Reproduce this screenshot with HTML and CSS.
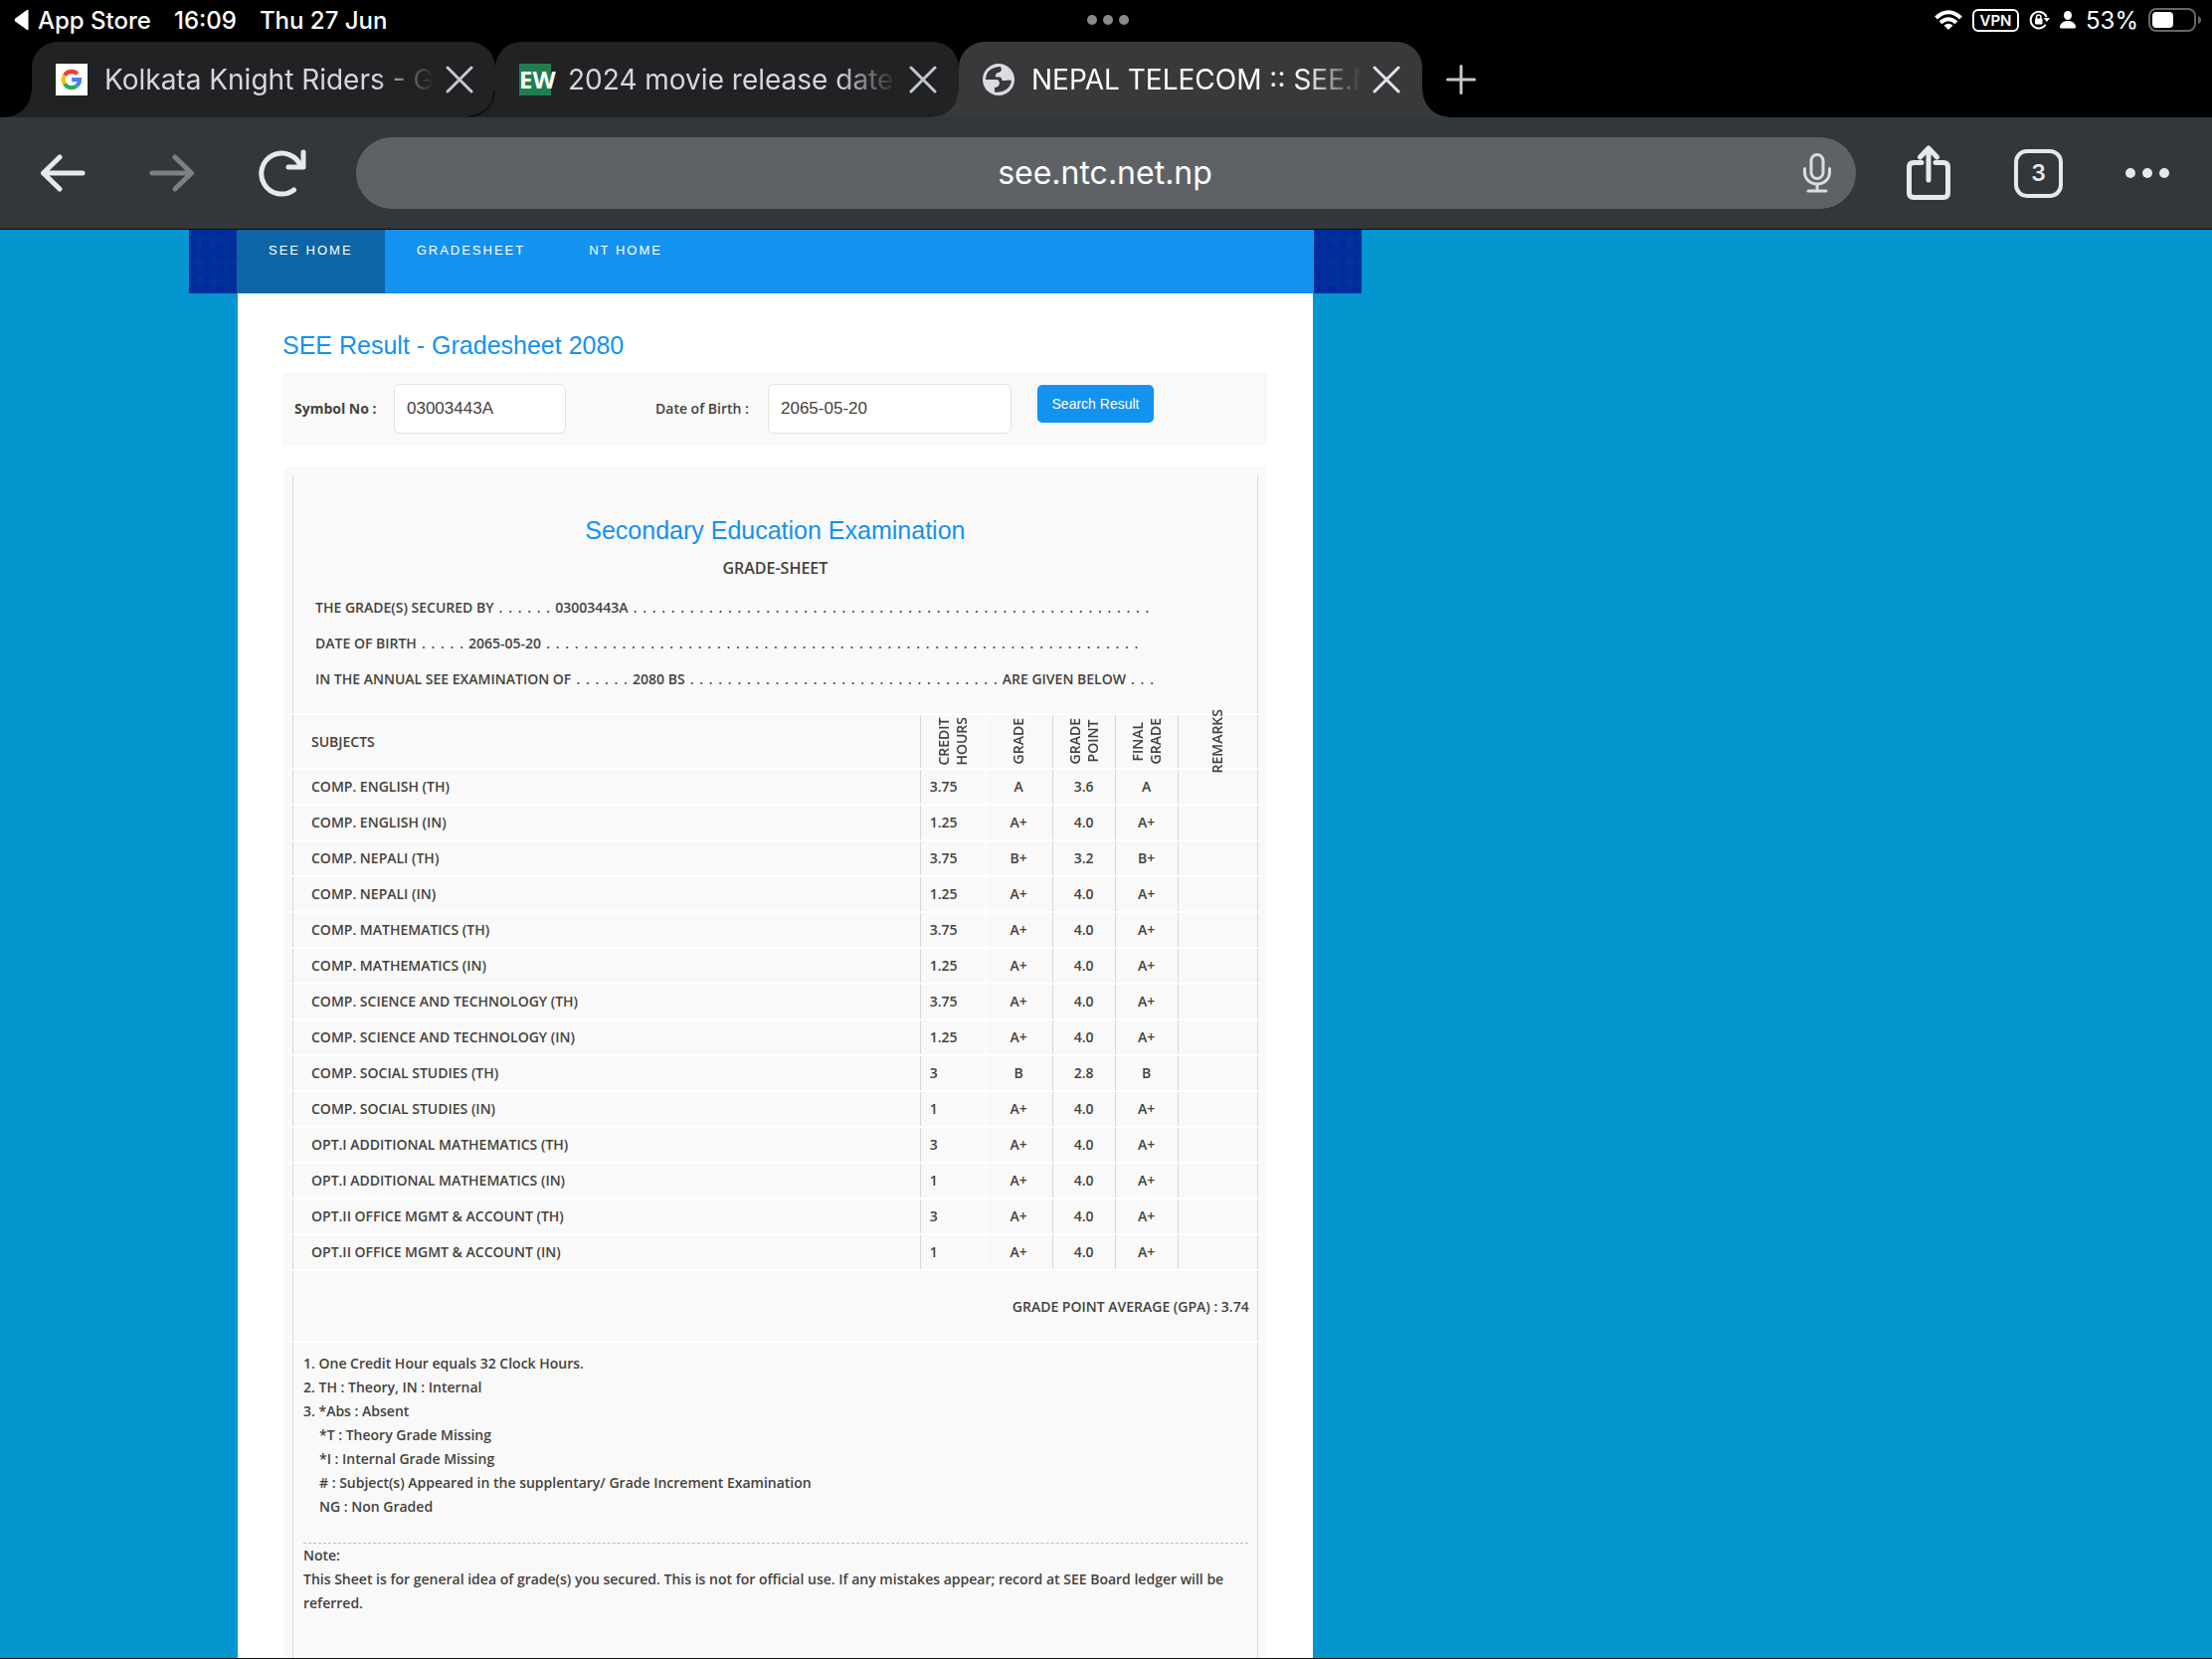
FILE: index.html
```html
<!DOCTYPE html>
<html lang="en">
<head>
<meta charset="utf-8">
<title>NEPAL TELECOM :: SEE.NTC.NET.NP</title>
<link rel="stylesheet" href="styles.css">
</head>
<body>
<header class="status">
  <div class="status-left">
    <a href="#" class="back-app"><svg width="16" height="22" viewBox="0 0 16 22" fill="#fff"><path d="M14.500 1.500V20.500Q14.500 21.800 13.200 21L1.300 12.500Q0 11 1.300 9.500L13.200 1Q14.500 .2 14.500 1.500Z"/></svg>App Store</a>
    <span>16:09</span>
    <span>Thu 27 Jun</span>
  </div>
  <div class="multitask"><i></i><i></i><i></i></div>
  <div class="status-right">
    <svg class="wifi" width="28" height="20" viewBox="0 0 28 20" fill="none" stroke="#fff" stroke-width="4"><path d="M1.500 8Q14-3.500 26.500 8"/><path d="M6 12.700Q14 5.800 22 12.700"/><path d="M14 20L9.500 15.500Q14 12 18.500 15.500Z" fill="#fff" stroke="none"/></svg>
    <span class="vpn">VPN</span>
    <svg class="lock" width="21" height="20" viewBox="0 0 21 20" fill="none" stroke="#fff" stroke-width="2"><path d="M16.800 14.800A8.300 8.300 0 1 1 17.600 7"/><path d="M14.500 8H21L18 12Z" fill="#fff" stroke="none"/><rect x="6" y="8.500" width="7.500" height="6" rx="1" fill="#fff" stroke="none"/><path d="M7.500 9V7.300a2.200 2.200 0 0 1 4.400 0V9" stroke-width="1.500"/></svg>
    <svg class="person" width="16" height="18" viewBox="0 0 16 18" fill="#fff"><ellipse cx="8" cy="4.500" rx="4" ry="4.500"/><path d="M0 16.500C0 12.500 3.500 10 8 10s8 2.500 8 6.500q0 1-1.200 1H1.200Q0 17.500 0 16.500Z"/></svg>
    <span class="pct">53%</span>
    <svg width="54" height="24" viewBox="0 0 54 24"><rect x="1" y="1" width="46" height="22" rx="7" fill="none" stroke="#666" stroke-width="2"/><rect x="4" y="4" width="21" height="16" rx="4" fill="#fff"/><path d="M50 8Q53 9 53 12T50 16Z" fill="#666"/></svg>
  </div>
</header>

<nav class="tabs">
  <div class="tab">
    <svg class="favicon" viewBox="0 0 32 32"><path fill="#fff" d="M0 0h32v32H0z"/><g fill="none" stroke-width="4.200"><path stroke="#ea4335" d="M9 11.800A8 8 0 0 1 21.800 10.400"/><path stroke="#fbbc05" d="M9 20.200A8 8 0 0 1 9 11.800"/><path stroke="#34a853" d="M21 22.300A8 8 0 0 1 9 20.200"/><path stroke="#4285f4" d="M16.200 16.200H24A8 8 0 0 1 21 22.300"/></g></svg>
    <span class="title">Kolkata Knight Riders - G</span>
    <button class="close" aria-label="Close tab"><svg width="28" height="28" viewBox="0 0 28 28"><path d="M2 2L26 26M26 2L2 26"/></svg></button>
  </div>
  <div class="tab">
    <span class="favicon ew">EW</span>
    <span class="title">2024 movie release dates</span>
    <button class="close" aria-label="Close tab"><svg width="28" height="28" viewBox="0 0 28 28"><path d="M2 2L26 26M26 2L2 26"/></svg></button>
  </div>
  <div class="tab active">
    <svg class="favicon" viewBox="0 0 32 32"><circle cx="16" cy="16" r="16" fill="#dadce0"/><path fill="#38393b" d="M3 15Q4 6 12 4Q15 3 18 3L19 6Q18 9 15 9L13 11V13.500H17Q19 13.500 19.500 17H23Q26 16 29 17Q28 24 22 27Q17 29.500 12 28.500V24Q16 24 17 20Q16.500 16 14 16H3Z"/></svg>
    <span class="title">NEPAL TELECOM :: SEE.N</span>
    <button class="close" aria-label="Close tab"><svg width="28" height="28" viewBox="0 0 28 28"><path d="M2 2L26 26M26 2L2 26"/></svg></button>
  </div>
  <button class="new-tab" aria-label="New tab"><svg width="30" height="30" viewBox="0 0 30 30"><path d="M15 1.500V28.500M1.500 15H28.500"/></svg></button>
</nav>

<div class="toolbar">
  <button class="tool" aria-label="Back"><svg width="46" height="38" viewBox="0 0 46 38"><path d="M20 3L3.500 19L20 35M3.500 19H43"/></svg></button>
  <button class="tool dim" aria-label="Forward"><svg width="46" height="38" viewBox="0 0 46 38"><path d="M26 3L42.500 19L26 35M42.500 19H3"/></svg></button>
  <button class="tool reload" aria-label="Reload"><svg width="48" height="48" viewBox="0 0 48 48"><path d="M35.500 41A20.500 20.500 0 1 1 42.500 17.500M45 3V18H30"/></svg></button>
  <div class="omnibox">
    <input class="url" type="text" value="see.ntc.net.np" aria-label="Address">
    <button class="mic" aria-label="Voice search"><svg width="28" height="40" viewBox="0 0 28 40"><rect x="8" y="1.500" width="12" height="24" rx="6"/><path d="M1.500 15.500V19C1.500 26 7 31 14 31S26.500 26 26.500 19V15.500M14 31V37M5 38H23"/></svg></button>
  </div>
  <button class="tool share" aria-label="Share"><svg width="44" height="56" viewBox="0 0 44 56"><path d="M15 17.500H7Q2.500 17.500 2.500 22V48Q2.500 52.500 7 52.500H37Q41.500 52.500 41.500 48V22Q41.500 17.500 37 17.500H29M22 35V4M13.500 12L22 3L30.500 12"/></svg></button>
  <button class="tool count" aria-label="Open tabs"><span>3</span></button>
  <button class="tool more" aria-label="Menu"><i></i><i></i><i></i></button>
</div>

<main class="view">
  <div class="site">
    <nav class="menu">
      <a href="#" class="on">SEE HOME</a>
      <a href="#">GRADESHEET</a>
      <a href="#">NT HOME</a>
    </nav>
    <div class="content">
      <h1>SEE Result - Gradesheet 2080</h1>
      <form class="search">
        <label for="symbol" class="symbol-label">Symbol No :</label>
        <input id="symbol" class="symbol" type="text" value="03003443A">
        <label for="dob" class="dob-label">Date of Birth :</label>
        <input id="dob" class="dob" type="text" value="2065-05-20">
        <button type="button">Search Result</button>
      </form>
      <div class="sheet">
        <section class="intro">
          <h2>Secondary Education Examination</h2>
          <h3>GRADE-SHEET</h3>
          <p>THE GRADE(S) SECURED BY <span class="dots">. . . . . .</span> 03003443A <span class="dots">. . . . . . . . . . . . . . . . . . . . . . . . . . . . . . . . . . . . . . . . . . . . . . . . . . . . . . .</span></p>
          <p>DATE OF BIRTH <span class="dots">. . . . .</span> 2065-05-20 <span class="dots">. . . . . . . . . . . . . . . . . . . . . . . . . . . . . . . . . . . . . . . . . . . . . . . . . . . . . . . . . . . . . . .</span></p>
          <p>IN THE ANNUAL SEE EXAMINATION OF <span class="dots">. . . . . .</span> 2080 BS <span class="dots">. . . . . . . . . . . . . . . . . . . . . . . . . . . . . . . . .</span> ARE GIVEN BELOW <span class="dots">. . .</span></p>
        </section>
        <table>
          <colgroup><col><col class="c-hours"><col class="c-grade"><col class="c-point"><col class="c-final"><col class="c-remarks"></colgroup>
          <thead>
            <tr><th>SUBJECTS</th><th><div><span>CREDIT<br>HOURS</span></div></th><th><div><span>GRADE</span></div></th><th><div><span>GRADE<br>POINT</span></div></th><th><div><span>FINAL<br>GRADE</span></div></th><th><div><span>REMARKS</span></div></th></tr>
          </thead>
          <tbody>
            <tr><td>COMP. ENGLISH (TH)</td><td>3.75</td><td>A</td><td>3.6</td><td>A</td><td></td></tr>
            <tr><td>COMP. ENGLISH (IN)</td><td>1.25</td><td>A+</td><td>4.0</td><td>A+</td><td></td></tr>
            <tr><td>COMP. NEPALI (TH)</td><td>3.75</td><td>B+</td><td>3.2</td><td>B+</td><td></td></tr>
            <tr><td>COMP. NEPALI (IN)</td><td>1.25</td><td>A+</td><td>4.0</td><td>A+</td><td></td></tr>
            <tr><td>COMP. MATHEMATICS (TH)</td><td>3.75</td><td>A+</td><td>4.0</td><td>A+</td><td></td></tr>
            <tr><td>COMP. MATHEMATICS (IN)</td><td>1.25</td><td>A+</td><td>4.0</td><td>A+</td><td></td></tr>
            <tr><td>COMP. SCIENCE AND TECHNOLOGY (TH)</td><td>3.75</td><td>A+</td><td>4.0</td><td>A+</td><td></td></tr>
            <tr><td>COMP. SCIENCE AND TECHNOLOGY (IN)</td><td>1.25</td><td>A+</td><td>4.0</td><td>A+</td><td></td></tr>
            <tr><td>COMP. SOCIAL STUDIES (TH)</td><td>3</td><td>B</td><td>2.8</td><td>B</td><td></td></tr>
            <tr><td>COMP. SOCIAL STUDIES (IN)</td><td>1</td><td>A+</td><td>4.0</td><td>A+</td><td></td></tr>
            <tr><td>OPT.I ADDITIONAL MATHEMATICS (TH)</td><td>3</td><td>A+</td><td>4.0</td><td>A+</td><td></td></tr>
            <tr><td>OPT.I ADDITIONAL MATHEMATICS (IN)</td><td>1</td><td>A+</td><td>4.0</td><td>A+</td><td></td></tr>
            <tr><td>OPT.II OFFICE MGMT &amp; ACCOUNT (TH)</td><td>3</td><td>A+</td><td>4.0</td><td>A+</td><td></td></tr>
            <tr><td>OPT.II OFFICE MGMT &amp; ACCOUNT (IN)</td><td>1</td><td>A+</td><td>4.0</td><td>A+</td><td></td></tr>
          </tbody>
        </table>
        <p class="gpa">GRADE POINT AVERAGE (GPA) : 3.74</p>
        <section class="notes">
          <p>1. One Credit Hour equals 32 Clock Hours.</p>
          <p>2. TH : Theory, IN : Internal</p>
          <p>3. *Abs : Absent</p>
          <p class="sub">*T : Theory Grade Missing</p>
          <p class="sub">*I : Internal Grade Missing</p>
          <p class="sub"># : Subject(s) Appeared in the supplentary/ Grade Increment Examination</p>
          <p class="sub">NG : Non Graded</p>
          <div class="remark">
            <p>Note:</p>
            <p>This Sheet is for general idea of grade(s) you secured. This is not for official use. If any mistakes appear; record at SEE Board ledger will be referred.</p>
          </div>
        </section>
      </div>
    </div>
  </div>
</main>
</body>
</html>
```
FILE: styles.css
```css
* { box-sizing: border-box; margin: 0; padding: 0; }
body { height: 100vh; display: flex; flex-direction: column; background: #000; font-family: "Inter", sans-serif; overflow: hidden; }
button { border: 0; background: none; font: inherit; color: inherit; }
svg { display: block; flex: none; }
a { color: inherit; text-decoration: none; }

/* device status bar */
.status { flex: none; height: 42px; display: grid; grid-template-columns: 1fr auto 1fr; align-items: center; padding: 0 10px 2px 14px; color: #fff; font-size: 24px; font-weight: 500; }
.status-left { display: flex; gap: 23px; }
.back-app { display: flex; align-items: center; gap: 8px; }
.multitask { display: flex; gap: 6px; }
.multitask i { width: 10px; height: 10px; border-radius: 50%; background: #8a8a8a; }
.status-right { display: flex; justify-content: flex-end; align-items: center; gap: 10px; }
.vpn { width: 47px; height: 23px; border: 2px solid #fff; border-radius: 6px; font-size: 15px; font-weight: 600; line-height: 19px; text-align: center; }
.pct { font-weight: 400; }

/* tab strip */
.tabs { flex: none; height: 76px; display: flex; align-items: stretch; padding-left: 32px; }
.tab { --fill: #212224; position: relative; flex: 0 1 466px; min-width: 0; display: flex; align-items: center; padding: 0 22px 0 24px; background: var(--fill); border-radius: 26px 26px 0 0; color: #d5d7dc; }
.tab::before, .tab::after { content: ""; position: absolute; bottom: 0; width: 27px; height: 27px; }
.tab::before { right: 100%; background: radial-gradient(circle at 0 0, transparent 25px, #000 26px, var(--fill) 27px); }
.tab::after { left: 100%; background: radial-gradient(circle at 100% 0, transparent 26px, var(--fill) 27px); }
.tab.active { --fill: #38393b; color: #fff; }
.tab.active::before { background: radial-gradient(circle at 0 0, transparent 26px, var(--fill) 27px); }
.favicon { flex: none; width: 32px; height: 32px; }
.ew { background: #207d4e; color: #fff; font: bold 24px/32px "Liberation Sans Narrow", "Open Sans", sans-serif; text-align: center; }
.title { flex: 1; min-width: 0; margin: 0 11px 0 17px; overflow: hidden; white-space: nowrap; font-size: 28px; line-height: 36px; -webkit-mask-image: linear-gradient(90deg, #000 calc(100% - 60px), transparent); mask-image: linear-gradient(90deg, #000 calc(100% - 60px), transparent); }
.close svg, .new-tab svg { fill: none; stroke: #c4c7cc; stroke-width: 3; stroke-linecap: round; }
.active .close svg { stroke: #e3e5e8; }
.new-tab { margin-left: 24px; }

/* toolbar */
.toolbar { flex: none; height: 113px; display: flex; align-items: center; padding: 0 39px 0 40px; background: #34373a; border-bottom: 1px solid #0b0d0e; }
.tool { flex: none; color: #e6e8ea; }
.tool svg { fill: none; stroke: currentColor; stroke-width: 5; stroke-linecap: round; stroke-linejoin: round; }
.tool + .tool { margin-left: 64px; }
.dim { color: #7d7f81; }
.omnibox { flex: 1; height: 72px; margin: 0 51px 0 50px; padding: 0 25px 0 51px; display: flex; align-items: center; border-radius: 36px; background: #5e6266; }
.url { flex: 1; min-width: 0; border: 0; background: none; color: #fff; font: 32px/40px "Inter", sans-serif; text-align: center; }
.mic svg { fill: none; stroke: #dadce0; stroke-width: 3; stroke-linecap: round; }
.tool.count { width: 49px; height: 49px; border: 4px solid #e6e8ea; border-radius: 13px; font-size: 23px; font-weight: 600; line-height: 41px; text-align: center; }
.tool.more { display: flex; gap: 7px; }
.more i { width: 10px; height: 10px; border-radius: 50%; background: #e6e8ea; }
.tool.more { margin-left: 63px; margin-right: 4px; }

/* web page */
.view { flex: 1; min-height: 0; overflow: hidden; display: flex; background: #0396cf; border-bottom: 1px solid #111; color: #45423c; font: 600 14px/24px "Trebuchet MS", "Open Sans", sans-serif; }
.site { width: 53%; margin-left: 190px; display: flex; flex-direction: column; }
.menu { flex: none; height: 64px; display: flex; padding: 0 48px; background: radial-gradient(circle at 30% 40%, #00229a99, transparent 6px) 0 0 / 13px 11px, radial-gradient(circle at 60% 70%, #00409a88, transparent 7px) 0 0 / 17px 19px, #002f9c; }
.menu::after { content: ""; flex: 1; background: #1492f0; }
.menu a { padding: 9px 32px; background: #1492f0; color: #fff; font: 13px/24px "Liberation Sans", Arial, sans-serif; letter-spacing: 2px; }
.menu .on { background: #0d65a6; }
.content { flex: 1; margin: 0 49px; padding: 36px 46px 0 45px; background: #fff; }
h1, h2 { color: #1492f0; font: 25px/32px "Liberation Sans", Arial, sans-serif; }
.search { height: 74px; margin-top: 11px; padding: 12px; display: flex; background: #f9f9f9; }
.search label { width: 100px; line-height: 50px; }
.search .symbol-label { font-weight: 700; }
.search .dob-label { width: 113px; margin-left: 90px; }
.search input { height: 50px; padding: 0 12px; border: 1px solid #e3e2da; border-radius: 6px; background: #fff; color: #45423c; font: 17px "Liberation Sans", Arial, sans-serif; }
.symbol { width: 173px; }
.dob { width: 245px; }
.search button { width: 117px; height: 38px; margin: 1px 0 0 26px; border-radius: 5px; background: #1492f0; color: #fff; font: 14px/34px "Liberation Sans", Arial, sans-serif; }
.sheet { margin: 21px 1px 0 2px; padding: 9px 8px 0; background: #f9f9f9; }
.intro, .gpa, .notes { border: 1px solid #d6d6d6; border-width: 0 1px; box-shadow: 0 -1px #fff; }
.intro { height: 239px; padding: 39px 22px 0; white-space: nowrap; }
.intro h2, h3 { text-align: center; }
h3 { font-size: 16px; font-weight: 600; line-height: 44px; }
.intro p { line-height: 36px; }
.dots { padding: 0 1px; font: 15px/24px "DejaVu Sans", sans-serif; }
table { width: 100%; table-layout: fixed; border-collapse: collapse; }
.c-hours { width: 65px; }
.c-grade { width: 68px; }
.c-point, .c-final { width: 63px; }
.c-remarks { width: 80px; }
tr { border-top: 2px solid #fff; }
tbody { border-bottom: 2px solid #fff; }
th, td { height: 36px; border-left: 1px solid #d6d6d6; border-right: 1px solid #d6d6d6; text-align: center; font-weight: 600; }
th { height: 55px; }
th:first-child, td:first-child { padding-left: 18px; text-align: left; }
td:nth-child(2) { padding-left: 9px; text-align: left; }
th:nth-child(2), td:nth-child(2) { border-right-color: #fff; }
th:nth-child(3), td:nth-child(3) { border-left-color: #fff; }
th div { height: 52px; display: flex; align-items: center; justify-content: center; }
th span { flex: none; writing-mode: vertical-rl; transform: rotate(180deg); line-height: 18px; text-align: center; }
.gpa { padding: 24px 8px; text-align: right; }
.notes { min-height: 400px; padding: 9px 9px 0 10px; box-shadow: 0 -2px #fff; }
.sub { padding-left: 16px; }
.remark { margin-top: 24px; border-top: 1px dashed #bcbcbc; }
```
